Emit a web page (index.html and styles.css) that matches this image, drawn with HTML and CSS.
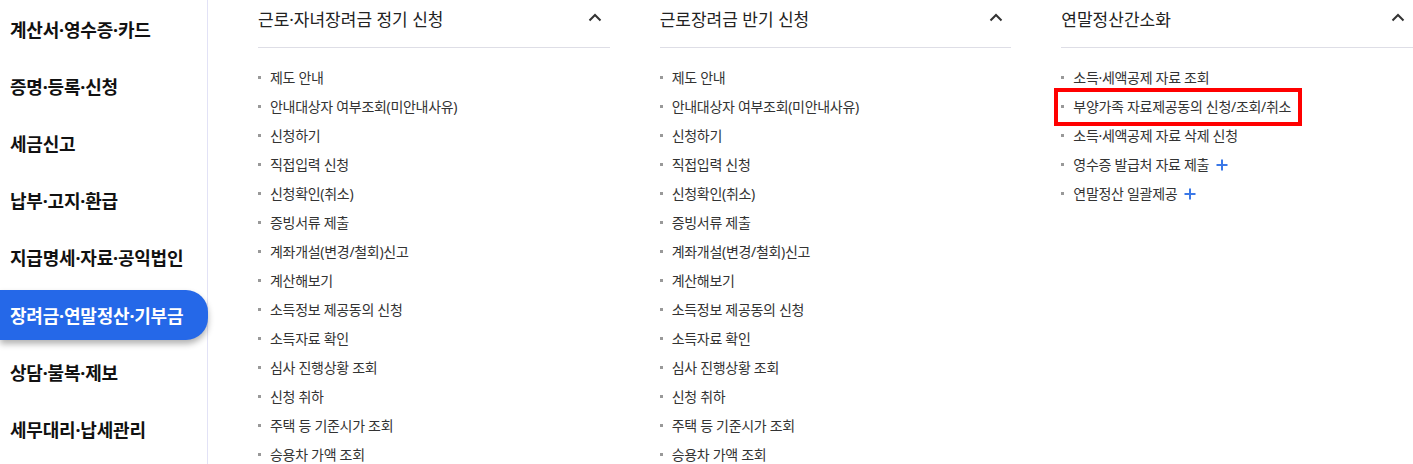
FILE: index.html
```html
<!DOCTYPE html>
<html>
    <head>
        <meta charset="utf-8" >
        <title>장려금·연말정산·기부금</title>
        <link rel="stylesheet" href="styles.css">
    </head>
    <body>
        <div class="side-nav">
            <a class="nav-item">계산서·영수증·카드</a>
            <a class="nav-item">증명·등록·신청</a>
            <a class="nav-item">세금신고</a>
            <a class="nav-item">납부·고지·환급</a>
            <a class="nav-item">지급명세·자료·공익법인</a>
            <a class="nav-item nav-active">장려금·연말정산·기부금</a>
            <a class="nav-item">상담·불복·제보</a>
            <a class="nav-item">세무대리·납세관리</a>
        </div>
        <div class="menu-area">
            <div class="menu-col">
                <div class="menu-head">
                    <h3 class="menu-title">근로·자녀장려금 정기 신청</h3>
                    <svg class="fold" width="14" height="9" viewBox="0 0 14 9"><polyline points="1.5,7.5 7,2 12.5,7.5" fill="none" stroke="#333" stroke-width="2"/></svg>
                </div>
                <ul class="menu-list">
                    <li><a class="menu-link">제도 안내</a></li>
                    <li><a class="menu-link">안내대상자 여부조회(미안내사유)</a></li>
                    <li><a class="menu-link">신청하기</a></li>
                    <li><a class="menu-link">직접입력 신청</a></li>
                    <li><a class="menu-link">신청확인(취소)</a></li>
                    <li><a class="menu-link">증빙서류 제출</a></li>
                    <li><a class="menu-link">계좌개설(변경/철회)신고</a></li>
                    <li><a class="menu-link">계산해보기</a></li>
                    <li><a class="menu-link">소득정보 제공동의 신청</a></li>
                    <li><a class="menu-link">소득자료 확인</a></li>
                    <li><a class="menu-link">심사 진행상황 조회</a></li>
                    <li><a class="menu-link">신청 취하</a></li>
                    <li><a class="menu-link">주택 등 기준시가 조회</a></li>
                    <li><a class="menu-link">승용차 가액 조회</a></li>
                </ul>
            </div>
            <div class="menu-col">
                <div class="menu-head">
                    <h3 class="menu-title">근로장려금 반기 신청</h3>
                    <svg class="fold" width="14" height="9" viewBox="0 0 14 9"><polyline points="1.5,7.5 7,2 12.5,7.5" fill="none" stroke="#333" stroke-width="2"/></svg>
                </div>
                <ul class="menu-list">
                    <li><a class="menu-link">제도 안내</a></li>
                    <li><a class="menu-link">안내대상자 여부조회(미안내사유)</a></li>
                    <li><a class="menu-link">신청하기</a></li>
                    <li><a class="menu-link">직접입력 신청</a></li>
                    <li><a class="menu-link">신청확인(취소)</a></li>
                    <li><a class="menu-link">증빙서류 제출</a></li>
                    <li><a class="menu-link">계좌개설(변경/철회)신고</a></li>
                    <li><a class="menu-link">계산해보기</a></li>
                    <li><a class="menu-link">소득정보 제공동의 신청</a></li>
                    <li><a class="menu-link">소득자료 확인</a></li>
                    <li><a class="menu-link">심사 진행상황 조회</a></li>
                    <li><a class="menu-link">신청 취하</a></li>
                    <li><a class="menu-link">주택 등 기준시가 조회</a></li>
                    <li><a class="menu-link">승용차 가액 조회</a></li>
                </ul>
            </div>
            <div class="menu-col">
                <div class="menu-head">
                    <h3 class="menu-title">연말정산간소화</h3>
                    <svg class="fold" width="14" height="9" viewBox="0 0 14 9"><polyline points="1.5,7.5 7,2 12.5,7.5" fill="none" stroke="#333" stroke-width="2"/></svg>
                </div>
                <ul class="menu-list">
                    <li><a class="menu-link">소득·세액공제 자료 조회</a></li>
                    <li><a class="menu-link marked">부양가족 자료제공동의 신청/조회/취소</a></li>
                    <li><a class="menu-link">소득·세액공제 자료 삭제 신청</a></li>
                    <li><a class="menu-link">영수증 발급처 자료 제출<svg class="more" width="12" height="12" viewBox="0 0 12 12"><path d="M6 0.5v11M0.5 6h11" stroke="#3b78e7" stroke-width="2"/></svg></a></li>
                    <li><a class="menu-link">연말정산 일괄제공<svg class="more" width="12" height="12" viewBox="0 0 12 12"><path d="M6 0.5v11M0.5 6h11" stroke="#3b78e7" stroke-width="2"/></svg></a></li>
                </ul>
            </div>
        </div>
    </body>
</html>
```

FILE: styles.css
```css
body {
    margin: 0;
    display: flex;
    height: 464px;
    overflow: hidden;
    background-color: #ffffff;
    font-family: "Noto Sans", "Noto Sans CJK KR", sans-serif;
    color: #222;
}
.side-nav {
    width: 208px;
    flex-shrink: 0;
    box-sizing: border-box;
    border-right: 1px solid #e2e2f6;
    display: flex;
    flex-direction: column;
}
.nav-item {
    display: flex;
    align-items: center;
    height: 50px;
    margin: 3.6px 0;
    padding-left: 10px;
    font-size: 18px;
    font-weight: 700;
    letter-spacing: -0.2px;
    color: #111;
}
.nav-active {
    margin-right: -1px;
    background-color: #2568e8;
    color: #ffffff;
    border-radius: 0 22px 22px 0;
    box-shadow: 0 4px 6px rgba(0,0,0,0.3);
}
.menu-area {
    flex: 1;
    display: grid;
    grid-template-columns: 1fr 1fr 1fr;
    column-gap: 50px;
    padding-left: 50px;
}
.menu-head {
    display: flex;
    justify-content: space-between;
    align-items: center;
    height: 36px;
    padding-bottom: 11px;
    border-bottom: 1px solid #dedee6;
}
.menu-title {
    margin: 0;
    font-size: 17px;
    font-weight: 400;
    letter-spacing: 0;
    color: #222;
}
.fold {
    margin-right: 8px;
    margin-top: -2px;
}
.menu-list {
    list-style: none;
    margin: 0;
    padding: 15px 0 0 0;
}
.menu-list li {
    height: 29px;
    display: flex;
    align-items: center;
}
.menu-link {
    display: inline-flex;
    align-items: center;
    line-height: 18px;
    font-size: 14px;
    letter-spacing: -0.3px;
    color: #333;
}
.menu-link::before {
    content: "";
    width: 3px;
    height: 3px;
    margin-right: 9px;
    background-color: #999;
}
.menu-link .more {
    margin-left: 7px;
}
.marked {
    padding: 3px 4px 3px 0;
    outline: 4px solid #ff0000;
    outline-offset: 3px;
}
```
